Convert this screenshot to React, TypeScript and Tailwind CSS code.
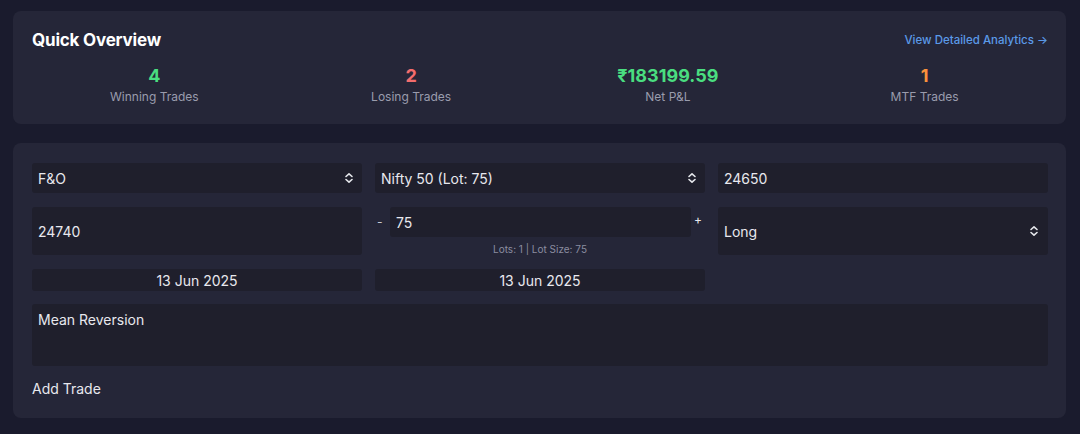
import React from "react";

function UpDown() {
  return (
    <svg width="10" height="12" viewBox="0 0 10 12" fill="none" className="shrink-0">
      <path d="M2 4.5 L5 1.8 L8 4.5" stroke="#e5e7eb" strokeWidth="1.6" strokeLinecap="round" strokeLinejoin="round" />
      <path d="M2 7.5 L5 10.2 L8 7.5" stroke="#e5e7eb" strokeWidth="1.6" strokeLinecap="round" strokeLinejoin="round" />
    </svg>
  );
}

const field = "bg-[#1f1f2c] rounded-[3px] text-[14px] text-[#e8e8ee] px-[6px] flex items-center";

export default function App() {
  const stats = [
    { value: "4", label: "Winning Trades", color: "text-[#4ade80]" },
    { value: "2", label: "Losing Trades", color: "text-[#f26d6d]" },
    { value: "₹183199.59", label: "Net P&L", color: "text-[#4ade80]" },
    { value: "1", label: "MTF Trades", color: "text-[#fb923c]" },
  ];

  return (
    <div
      className="min-h-[434px] bg-[#1a1b2d] pl-[13px] pr-[14px] pt-[11px] flex flex-col gap-[19px]"
      style={{ fontFamily: "Inter, 'Noto Sans', sans-serif" }}
    >
      <div className="bg-[#252638] rounded-[8px] px-[19px] pt-[19px] pb-[19px]">
        <div className="flex items-center justify-between h-[22px]">
          <h2 className="text-[17px] font-bold text-white tracking-[-0.2px]">Quick Overview</h2>
          <a className="text-[11.5px] text-[#5b9ae8] font-medium mr-[-1px]">View Detailed Analytics →</a>
        </div>
        <div className="grid grid-cols-4 mt-[12px] -mx-[6px]">
          {stats.map((s) => (
            <div key={s.label} className="flex flex-col items-center">
              <span className={`text-[18px] leading-[24px] font-bold ${s.color}`}>{s.value}</span>
              <span className="text-[12px] leading-[16px] text-[#9a9cad] mt-px">{s.label}</span>
            </div>
          ))}
        </div>
      </div>

      <div className="bg-[#252638] rounded-[8px] pl-[19px] pr-[18px] pt-[20px] pb-[19px]">
        <div className="grid grid-cols-3 gap-x-[13px]">
          <div className={`${field} h-[30px] justify-between pr-[8px]`}>
            <span>F&amp;O</span>
            <UpDown />
          </div>
          <div className={`${field} h-[30px] justify-between pr-[8px]`}>
            <span>Nifty 50 (Lot: 75)</span>
            <UpDown />
          </div>
          <div className={`${field} h-[30px]`}>24650</div>
        </div>

        <div className="grid grid-cols-3 gap-x-[13px] mt-[14px]">
          <div className={`${field} h-[48px]`}>24740</div>
          <div className="flex flex-col">
            <div className="flex items-center h-[30px]">
              <span className="w-[15px] text-[12px] text-[#c8c8d2] pl-[2px]">-</span>
              <div className={`${field} h-[30px] flex-1`}>75</div>
              <span className="w-[14px] text-center text-[12px] text-[#e8e8ee] -mt-[4px]">+</span>
            </div>
            <div className="text-center text-[10px] text-[#8b8da0] mt-[6px] leading-[12px]">
              Lots: 1 | Lot Size: 75
            </div>
          </div>
          <div className={`${field} h-[48px] justify-between pr-[9px]`}>
            <span>Long</span>
            <UpDown />
          </div>
        </div>

        <div className="grid grid-cols-3 gap-x-[13px] mt-[14px]">
          <div className={`${field} h-[22px] justify-center`}>13 Jun 2025</div>
          <div className={`${field} h-[22px] justify-center`}>13 Jun 2025</div>
          <div />
        </div>

        <div className="bg-[#1f1f2c] rounded-[3px] h-[62px] mt-[13px] px-[6px] pt-[5px] text-[14px] text-[#e8e8ee]">
          Mean Reversion
        </div>

        <div className="mt-[13px] text-[14px] leading-[20px] text-[#e8e8ee]">Add Trade</div>
      </div>
    </div>
  );
}
